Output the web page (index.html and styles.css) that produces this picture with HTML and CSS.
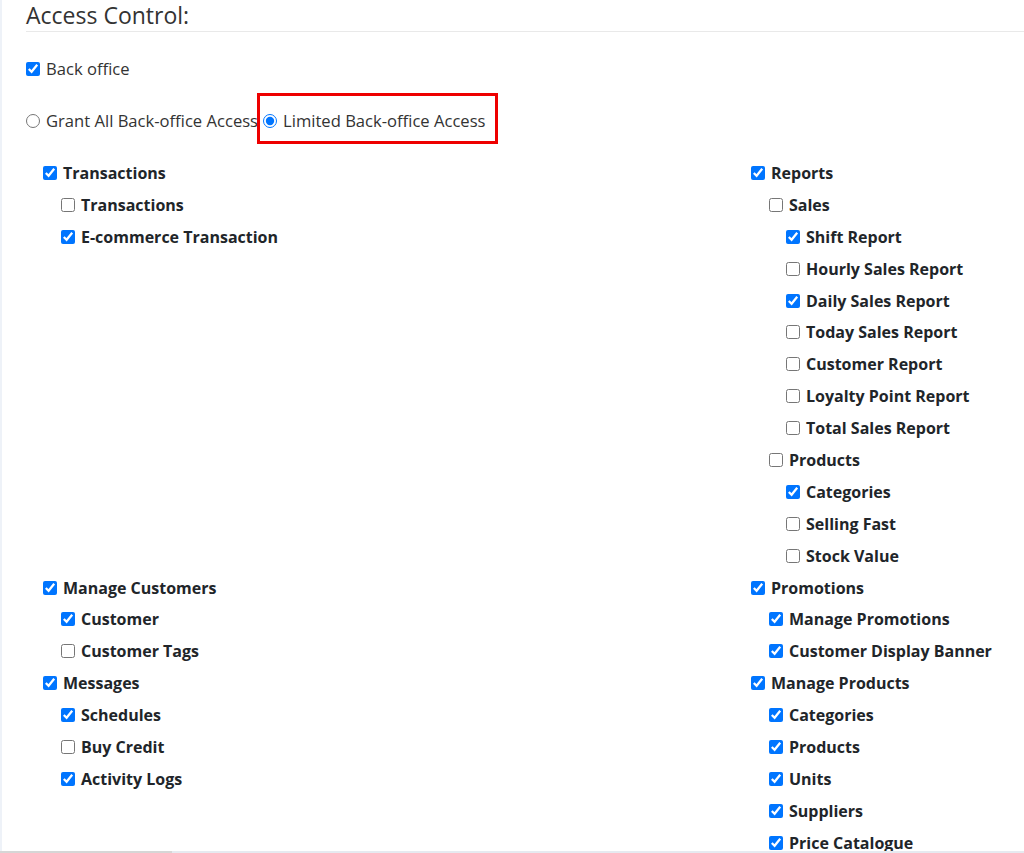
FILE: index.html
```html
<!DOCTYPE html>
<html>
<head>
<meta charset="utf-8">
<link rel="stylesheet" href="styles.css">
</head>
<body>
<div class="page">
  <h2 class="title">Access Control:</h2>
  <label class="opt top-opt"><input type="checkbox" checked> <span>Back office</span></label>
  <div class="radios">
    <label class="opt"><input type="radio" name="bo"> <span>Grant All Back-office Access</span></label>
    <label class="opt marked"><input type="radio" name="bo" checked> <span>Limited Back-office Access</span></label>
  </div>
  <div class="tree">
    <div class="group">
      <label class="item l1"><input type="checkbox" checked><span>Transactions</span></label>
      <label class="item l2"><input type="checkbox"><span>Transactions</span></label>
      <label class="item l2"><input type="checkbox" checked><span>E-commerce Transaction</span></label>
    </div>
    <div class="group">
      <label class="item l1"><input type="checkbox" checked><span>Reports</span></label>
      <label class="item l2"><input type="checkbox"><span>Sales</span></label>
      <label class="item l3"><input type="checkbox" checked><span>Shift Report</span></label>
      <label class="item l3"><input type="checkbox"><span>Hourly Sales Report</span></label>
      <label class="item l3"><input type="checkbox" checked><span>Daily Sales Report</span></label>
      <label class="item l3"><input type="checkbox"><span>Today Sales Report</span></label>
      <label class="item l3"><input type="checkbox"><span>Customer Report</span></label>
      <label class="item l3"><input type="checkbox"><span>Loyalty Point Report</span></label>
      <label class="item l3"><input type="checkbox"><span>Total Sales Report</span></label>
      <label class="item l2"><input type="checkbox"><span>Products</span></label>
      <label class="item l3"><input type="checkbox" checked><span>Categories</span></label>
      <label class="item l3"><input type="checkbox"><span>Selling Fast</span></label>
      <label class="item l3"><input type="checkbox"><span>Stock Value</span></label>
    </div>
    <div class="group">
      <label class="item l1"><input type="checkbox" checked><span>Manage Customers</span></label>
      <label class="item l2"><input type="checkbox" checked><span>Customer</span></label>
      <label class="item l2"><input type="checkbox"><span>Customer Tags</span></label>
      <label class="item l1"><input type="checkbox" checked><span>Messages</span></label>
      <label class="item l2"><input type="checkbox" checked><span>Schedules</span></label>
      <label class="item l2"><input type="checkbox"><span>Buy Credit</span></label>
      <label class="item l2"><input type="checkbox" checked><span>Activity Logs</span></label>
    </div>
    <div class="group">
      <label class="item l1"><input type="checkbox" checked><span>Promotions</span></label>
      <label class="item l2"><input type="checkbox" checked><span>Manage Promotions</span></label>
      <label class="item l2"><input type="checkbox" checked><span>Customer Display Banner</span></label>
      <label class="item l1"><input type="checkbox" checked><span>Manage Products</span></label>
      <label class="item l2"><input type="checkbox" checked><span>Categories</span></label>
      <label class="item l2"><input type="checkbox" checked><span>Products</span></label>
      <label class="item l2"><input type="checkbox" checked><span>Units</span></label>
      <label class="item l2"><input type="checkbox" checked><span>Suppliers</span></label>
      <label class="item l2"><input type="checkbox" checked><span>Price Catalogue</span></label>
    </div>
  </div>
</div>
<div class="hbar"><div class="hbar-thumb"></div></div>
</body>
</html>
```

FILE: styles.css
```css
html, body {
  margin: 0;
  padding: 0;
  background: #ffffff;
  overflow: hidden;
}
body {
  font-family: "Open Sans", "Noto Sans", sans-serif;
  color: #212529;
  border-left: 2px solid #eef2f8;
  height: 853px;
  box-sizing: border-box;
}
.page {
  padding-left: 24px;
}
.title {
  margin: 0;
  font-size: 23px;
  font-weight: 400;
  color: #333;
  line-height: 30px;
  border-bottom: 1px solid #e9e9e9;
  height: 32px;
  box-sizing: border-box;
}
.opt {
  display: inline-flex;
  align-items: center;
  font-size: 16.6px;
  line-height: 24px;
  color: #333;
  position: relative;
}
.opt input {
  margin: 0 6px 0 0;
  width: 14px;
  height: 14px;
}
.top-opt {
  margin-top: 25px;
}
.radios {
  margin-top: 28px;
  display: flex;
  align-items: center;
  gap: 5px;
}
.marked::after {
  content: "";
  position: absolute;
  left: -6px;
  right: -12px;
  top: -16px;
  bottom: -11px;
  border: 3px solid #ee0000;
}
.tree {
  margin-top: 24px;
  padding-left: 17px;
  display: grid;
  grid-template-columns: 708px 1fr;
}
.group {
  display: flex;
  flex-direction: column;
}
.item {
  display: flex;
  align-items: center;
  height: 31.9px;
  font-size: 16px;
  font-weight: 700;
  color: #212529;
  white-space: nowrap;
}
.item input {
  margin: 0 6px 0 0;
  width: 14px;
  height: 14px;
  flex: none;
}
.l2 { padding-left: 18px; }
.l3 { padding-left: 35px; }
.hbar {
  position: fixed;
  left: 0;
  right: 0;
  bottom: 0;
  height: 2px;
  background: #e6eaf0;
}
.hbar-thumb {
  width: 172px;
  height: 2px;
  background: #d6d6d6;
}
```
